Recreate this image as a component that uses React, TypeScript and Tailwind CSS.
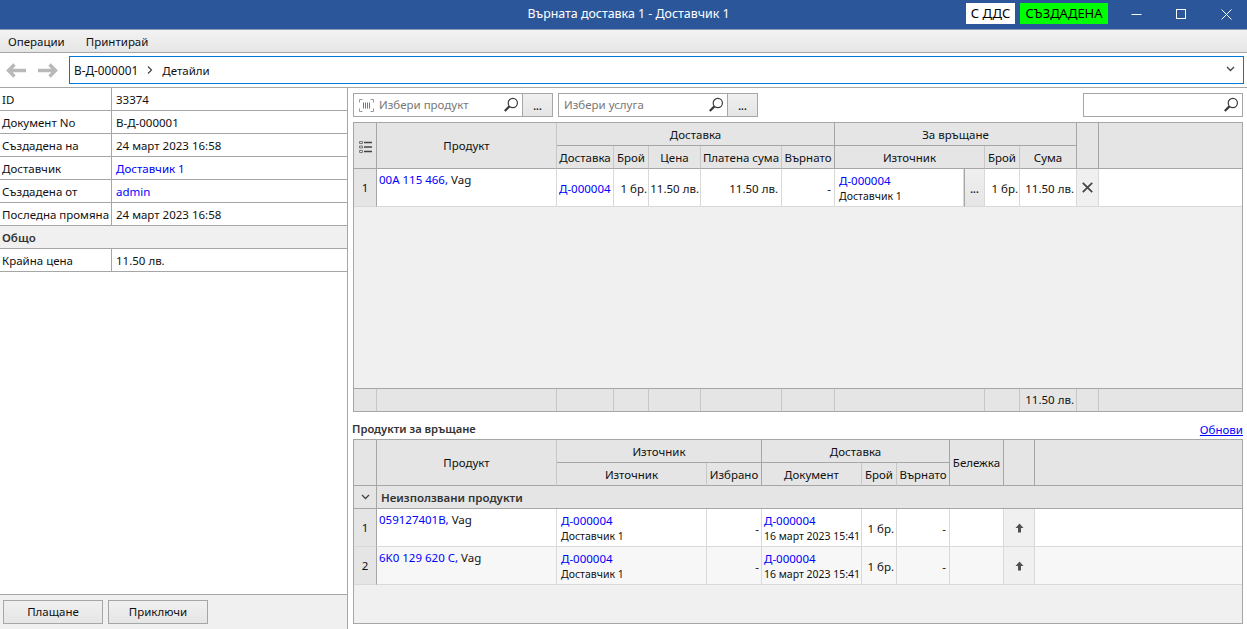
import type { ReactNode } from "react";

const hd = "flex items-center justify-center bg-[#e5e5e5] border-r border-b border-[#a6a6a6] pt-[2px] whitespace-nowrap overflow-hidden";
const hdLight = "flex items-center justify-center bg-[#e5e5e5] border-r border-b border-r-[#c8c8c8] border-b-[#a6a6a6] pt-[2px] whitespace-nowrap overflow-hidden";
const td = "border-r border-b border-[#d9d9d9] whitespace-nowrap overflow-hidden";
const link = "text-[#0000ff]";

function SearchIcon() {
  return (
    <svg width="16" height="16" viewBox="0 0 16 16" fill="none" className="shrink-0">
      <circle cx="9.8" cy="6" r="4.6" stroke="#3a3a3a" strokeWidth="1.2" />
      <path d="M6.4 9.4 L1.8 14" stroke="#3a3a3a" strokeWidth="2.2" />
    </svg>
  );
}

function BarcodeIcon() {
  return (
    <svg width="15" height="13" viewBox="0 0 15 13" fill="none" stroke="#999" className="shrink-0">
      <path d="M3.5 .5H.5V3.5M11.5 .5H14.5V3.5M.5 9.5V12.5H3.5M14.5 9.5V12.5H11.5" />
      <path d="M4.5 3.5V9.5M6.5 3.5V9.5M8.5 3.5V9.5M10.5 3.5V9.5" stroke="#777" />
    </svg>
  );
}

function NavArrow({ flip }: { flip?: boolean }) {
  return (
    <svg width="20" height="15" viewBox="0 0 20 15" className={flip ? "-scale-x-100" : ""}>
      <path d="M8.5 1.5 L2.5 7.5 L8.5 13.5 M3 7.5 H20" fill="none" stroke="#b9b9b9" strokeWidth="3.4" />
    </svg>
  );
}

function ListIcon() {
  return (
    <svg width="13" height="12" viewBox="0 0 13 12">
      <path d="M5 1.5H13M5 6H13M5 10.5H13" stroke="#444" strokeWidth="1.6" />
      <path d="M.5 .5H3.5V2.5H.5ZM.5 5H3.5V7H.5ZM.5 9.5H3.5V11.5H.5Z" fill="none" stroke="#777" />
    </svg>
  );
}

function ArrowUp() {
  return (
    <svg width="9" height="10" viewBox="0 0 9 10">
      <path d="M4.5 .5 L8.5 5 H6 V9.5 H3 V5 H.5 Z" fill="#505050" />
    </svg>
  );
}

function Chevron({ className = "" }: { className?: string }) {
  return (
    <svg width="9" height="6" viewBox="0 0 9 6" fill="none" className={className}>
      <path d="M1 1 L4.5 4.5 L8 1" stroke="#444" strokeWidth="1.3" />
    </svg>
  );
}

function InfoRow({ label, children, blue }: { label: string; children: ReactNode; blue?: boolean }) {
  return (
    <div className="flex h-[23px] border-b border-[#a6a6a6] items-center">
      <div className="w-[112px] h-full shrink-0 border-r border-[#a6a6a6] pl-[2px] pt-[2px] flex items-center whitespace-nowrap">{label}</div>
      <div className={`pl-[4px] pt-[2px] ${blue ? link : ""}`}>{children}</div>
    </div>
  );
}

function PickerBox({ text, barcode, w }: { text: string; barcode?: boolean; w: string }) {
  return (
    <div className="flex h-[24px]">
      <div className={`${w} flex items-center border border-[#a6a6a6] bg-white pl-[5px] pr-[3px] text-[#777]`}>
        {barcode && <span className="mr-[5px] flex"><BarcodeIcon /></span>}
        <span className="flex-1 whitespace-nowrap">{text}</span>
        <SearchIcon />
      </div>
      <div className="w-[31px] -ml-px border border-[#a6a6a6] bg-gradient-to-b from-[#f0f0f0] to-[#e5e5e5] flex items-center justify-center font-semibold text-[10px] pt-[2px]">...</div>
    </div>
  );
}

function TwoLine({ top, bottom, pl = "pl-[4px]" }: { top: string; bottom: string; pl?: string }) {
  return (
    <div className={`${pl} flex flex-col pt-[4px] leading-[16px]`}>
      <span className={link}>{top}</span>
      <span className="text-[10.5px] leading-[15px]">{bottom}</span>
    </div>
  );
}

function ReturnRow({ n, code, maker, shaded }: { n: number; code: string; maker: string; shaded?: boolean }) {
  const bg = shaded ? "bg-[#f7f7f7]" : "bg-white";
  return (
    <>
      <div className="bg-[#e5e5e5] border-r border-b border-r-[#a6a6a6] border-b-[#d9d9d9] flex items-center justify-center">{n}</div>
      <div className={`${td} ${bg} pl-[2px] pt-[3px] leading-[16px]`}>
        <span className={link}>{code},</span> {maker}
      </div>
      <div className={`${td} ${bg}`}><TwoLine top="Д-000004" bottom="Доставчик 1" /></div>
      <div className={`${td} ${bg} flex items-center justify-end pr-[2px] pt-[3px]`}>-</div>
      <div className={`${td} ${bg}`}><TwoLine top="Д-000004" bottom="16 март 2023 15:41" pl="pl-[2px]" /></div>
      <div className={`${td} ${bg} flex items-center justify-end pr-[2px] pt-[2px]`}>1 бр.</div>
      <div className={`${td} ${bg} flex items-center justify-end pr-[3px] pt-[2px]`}>-</div>
      <div className={`${td} ${bg}`} />
      <div className={`${td} bg-[#f0f0f0] flex items-center justify-center`}><ArrowUp /></div>
      <div className={`border-b border-[#d9d9d9] ${bg}`} />
    </>
  );
}

export default function App() {
  return (
    <div className="w-[1247px] h-[629px] overflow-hidden flex flex-col bg-white text-[#111] text-[11.5px] font-['Noto_Sans',sans-serif]">
      {/* title bar */}
      <div className="h-[30px] shrink-0 bg-[#2b579a] border-b border-[#8c9cb8] flex items-center relative">
        <div className="flex-1 text-center text-white text-[12.4px] pl-[10px]">Върната доставка 1 - Доставчик 1</div>
        <div className="absolute left-[966px] top-[3px] h-[21px] w-[49px] bg-white text-black text-[13px] flex items-center justify-center">С ДДС</div>
        <div className="absolute left-[1020px] top-[3px] h-[21px] w-[88px] bg-[#00ff00] text-black text-[13px] flex items-center justify-center">СЪЗДАДЕНА</div>
        <div className="absolute left-[1114px] top-0 h-full flex">
          <div className="w-[45px] flex items-center justify-center">
            <svg width="11" height="11" viewBox="0 0 11 11"><path d="M.5 5.5H10.5" stroke="#fff" /></svg>
          </div>
          <div className="w-[45px] flex items-center justify-center">
            <svg width="11" height="11" viewBox="0 0 11 11"><rect x=".5" y=".5" width="9" height="9" fill="none" stroke="#fff" /></svg>
          </div>
          <div className="w-[45px] flex items-center justify-center">
            <svg width="11" height="11" viewBox="0 0 11 11"><path d="M.5 .5L10.5 10.5M10.5 .5L.5 10.5" stroke="#fff" /></svg>
          </div>
        </div>
      </div>

      {/* menu */}
      <div className="h-[23px] shrink-0 bg-gradient-to-b from-[#f2f2f2] to-[#e6e6e6] border-b border-[#a6a6a6] flex items-center pl-[8px] pt-[2px] gap-[21px]">
        <span>Операции</span>
        <span>Принтирай</span>
      </div>

      {/* breadcrumb */}
      <div className="h-[35px] shrink-0 border-b border-[#a6a6a6] flex items-center pl-[6px] pr-[3px] bg-white">
        <div className="flex gap-[12px] w-[63px] shrink-0">
          <NavArrow />
          <NavArrow flip />
        </div>
        <div className="flex-1 h-[28px] border border-[#0078d7] flex items-center pl-[4px] pr-[8px]">
          <span className="pt-[2px] text-[11.8px]">В-Д-000001</span>
          <svg width="6" height="8" viewBox="0 0 6 8" className="mx-[9px]"><path d="M1 .5L4.5 4L1 7.5" fill="none" stroke="#444" strokeWidth="1.2" /></svg>
          <span className="pt-[2px]">Детайли</span>
          <Chevron className="ml-auto -mt-[2px]" />
        </div>
      </div>

      <div className="flex-1 flex min-h-0">
        {/* left panel */}
        <div className="w-[348px] shrink-0 border-r border-[#a6a6a6] flex flex-col">
          <InfoRow label="ID">33374</InfoRow>
          <InfoRow label="Документ No">В-Д-000001</InfoRow>
          <InfoRow label="Създадена на">24 март 2023 16:58</InfoRow>
          <InfoRow label="Доставчик" blue>Доставчик 1</InfoRow>
          <InfoRow label="Създадена от" blue>admin</InfoRow>
          <InfoRow label="Последна промяна">24 март 2023 16:58</InfoRow>
          <div className="h-[23px] border-b border-[#a6a6a6] bg-[#f0f0f0] flex items-center pl-[2px] pt-[2px] font-semibold text-[#333]">Общо</div>
          <InfoRow label="Крайна цена">11.50 лв.</InfoRow>
          <div className="flex-1" />
          <div className="h-[35px] border-t border-[#a6a6a6] bg-[#f0f0f0] flex items-start pt-[5px] pl-[3px] gap-[5px]">
            <div className="w-[100px] h-[24px] border border-[#a6a6a6] bg-gradient-to-b from-[#f0f0f0] to-[#e5e5e5] flex items-center justify-center">Плащане</div>
            <div className="w-[100px] h-[24px] border border-[#a6a6a6] bg-gradient-to-b from-[#f0f0f0] to-[#e5e5e5] flex items-center justify-center">Приключи</div>
          </div>
        </div>

        {/* right panel */}
        <div className="flex-1 min-w-0 flex flex-col pl-[5px] pr-[4px] pt-[5px] pb-[5px]">
          <div className="flex h-[24px] shrink-0 gap-[5px]">
            <PickerBox text="Избери продукт" barcode w="w-[170px]" />
            <PickerBox text="Избери услуга" w="w-[170px]" />
            <div className="ml-auto w-[160px] border border-[#a6a6a6] bg-white flex items-center justify-end pr-[3px]">
              <SearchIcon />
            </div>
          </div>

          {/* products being returned */}
          <div className="mt-[5px] h-[290px] shrink-0 border border-[#a6a6a6] bg-[#f0f0f0] grid grid-cols-[23px_180px_57px_35px_52px_81px_53px_129px_21px_35px_57px_22px_1fr] grid-rows-[23px_23px_38px_1fr_22px]">
            <div className={`${hd} row-span-2`}><ListIcon /></div>
            <div className={`${hd} row-span-2 border-r-[#c8c8c8] !pt-0`}>Продукт</div>
            <div className={`${hd} col-span-5`}>Доставка</div>
            <div className={`${hd} col-span-4`}>За връщане</div>
            <div className={`${hd} row-span-2`} />
            <div className={`${hd} row-span-2 border-r-0`} />
            <div className={hdLight}>Доставка</div>
            <div className={hdLight}>Брой</div>
            <div className={hdLight}>Цена</div>
            <div className={hdLight}>Платена сума</div>
            <div className={hd}>Върнато</div>
            <div className={`${hdLight} col-span-2`}>Източник</div>
            <div className={hdLight}>Брой</div>
            <div className={hd}>Сума</div>

            <div className="bg-[#e5e5e5] border-r border-b border-r-[#a6a6a6] border-b-[#d9d9d9] flex items-center justify-center">1</div>
            <div className={`${td} bg-white pl-[2px] pt-[3px] leading-[16px]`}><span className={link}>00A 115 466,</span> Vag</div>
            <div className={`${td} bg-white flex items-center pl-[2px] pt-[3px] ${link}`}>Д-000004</div>
            <div className={`${td} bg-white flex items-center justify-end pr-[1px] pt-[3px]`}>1 бр.</div>
            <div className={`${td} bg-white flex items-center justify-end pr-[1px] pt-[3px]`}>11.50 лв.</div>
            <div className={`${td} bg-white flex items-center justify-end pr-[3px] pt-[3px]`}>11.50 лв.</div>
            <div className={`${td} bg-white flex items-center justify-end pr-[3px] pt-[3px]`}>-</div>
            <div className={`${td} bg-white`}><TwoLine top="Д-000004" bottom="Доставчик 1" /></div>
            <div className="border-l border-r border-b border-l-[#a6a6a6] border-r-[#d9d9d9] border-b-[#d9d9d9] bg-gradient-to-b from-[#f0f0f0] to-[#e5e5e5] flex items-center justify-center font-semibold text-[10px] pt-[4px]">...</div>
            <div className={`${td} bg-white flex items-center justify-end pr-[1px] pt-[3px]`}>1 бр.</div>
            <div className={`${td} bg-white flex items-center justify-end pr-[2px] pt-[3px]`}>11.50 лв.</div>
            <div className={`${td} bg-[#f0f0f0] flex items-center justify-center`}>
              <svg width="11" height="11" viewBox="0 0 11 11"><path d="M.8 .8L10.2 10.2M10.2 .8L.8 10.2" stroke="#444" strokeWidth="1.7" /></svg>
            </div>
            <div className="bg-white border-b border-[#d9d9d9]" />

            <div className="col-span-13 border-b border-[#a6a6a6]" />

            <div className="bg-[#e5e5e5] border-r border-[#c8c8c8]" />
            <div className="bg-[#e5e5e5] border-r border-[#c8c8c8]" />
            <div className="bg-[#e5e5e5] border-r border-[#c8c8c8]" />
            <div className="bg-[#e5e5e5] border-r border-[#c8c8c8]" />
            <div className="bg-[#e5e5e5] border-r border-[#c8c8c8]" />
            <div className="bg-[#e5e5e5] border-r border-[#c8c8c8]" />
            <div className="bg-[#e5e5e5] border-r border-[#c8c8c8]" />
            <div className="col-span-2 bg-[#e5e5e5] border-r border-[#c8c8c8]" />
            <div className="bg-[#e5e5e5] border-r border-[#c8c8c8]" />
            <div className="bg-[#e5e5e5] border-r border-[#c8c8c8] flex items-center justify-end pr-[2px]">11.50 лв.</div>
            <div className="bg-[#e5e5e5] border-r border-[#c8c8c8]" />
            <div className="bg-[#e5e5e5]" />
          </div>

          <div className="mt-[8px] h-[19px] shrink-0 flex items-center justify-between pl-0">
            <span className="font-semibold text-[11.2px] text-[#333] -ml-px">Продукти за връщане</span>
            <a className="text-[#0000ff] underline">Обнови</a>
          </div>

          {/* products available */}
          <div className="flex-1 min-h-0 border border-[#a6a6a6] bg-[#f0f0f0] grid grid-cols-[23px_180px_150px_55px_100px_35px_53px_54px_31px_1fr] grid-rows-[23px_23px_23px_38px_38px_1fr]">
            <div className={`${hd} row-span-2`} />
            <div className={`${hd} row-span-2 border-r-[#c8c8c8] !pt-0`}>Продукт</div>
            <div className={`${hd} col-span-2`}>Източник</div>
            <div className={`${hd} col-span-3`}>Доставка</div>
            <div className={`${hd} row-span-2 !pt-0`}>Бележка</div>
            <div className={`${hd} row-span-2`} />
            <div className={`${hd} row-span-2 border-r-0`} />
            <div className={hdLight}>Източник</div>
            <div className={hd}>Избрано</div>
            <div className={hdLight}>Документ</div>
            <div className={hdLight}>Брой</div>
            <div className={hd}>Върнато</div>

            <div className="bg-[#e5e5e5] border-r border-b border-[#a6a6a6] flex items-center justify-center"><Chevron /></div>
            <div className="col-span-9 bg-[#e5e5e5] border-b border-[#a6a6a6] flex items-center pl-[4px] pt-[2px] font-semibold text-[#333]">Неизползвани продукти</div>

            <ReturnRow n={1} code="059127401B" maker="Vag" />
            <ReturnRow n={2} code="6K0 129 620 C" maker="Vag" shaded />
          </div>
        </div>
      </div>
    </div>
  );
}
